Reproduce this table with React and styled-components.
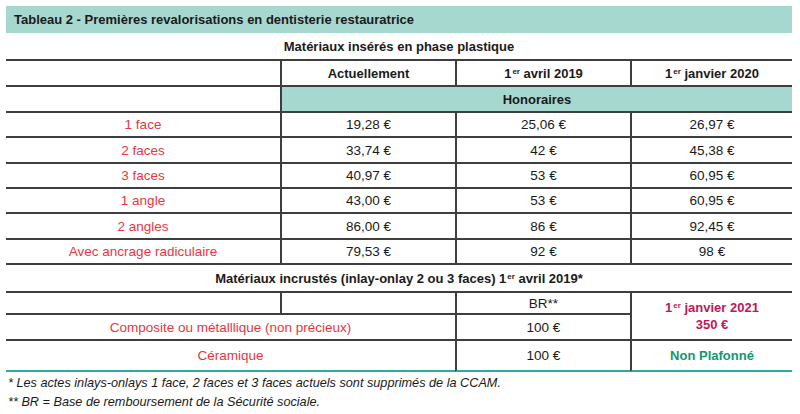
import React from "react";
import styled, { createGlobalStyle } from "styled-components";

const Global = createGlobalStyle`
  html, body { margin: 0; padding: 0; background: #ffffff; }
  body { font-family: "Liberation Sans", Arial, sans-serif; color: #1e1e1e; }
`;

const Page = styled.div`
  width: 786px;
  padding: 6px 0 0 6px;
`;

const TitleBar = styled.div`
  height: 27px;
  background: #a7d8d0;
  display: flex;
  align-items: center;
  padding-left: 8px;
  font-size: 13px;
  font-weight: 700;
  color: #1a1a1a;
`;

const Caption = styled.div`
  height: 26px;
  display: flex;
  align-items: center;
  justify-content: center;
  font-size: 13px;
  font-weight: 700;
  color: #1a1a1a;
`;

const Table = styled.table`
  width: 786px;
  border-collapse: separate;
  border-spacing: 0;
  table-layout: fixed;
  border-top: 2px solid #3e3e3e;
`;

const Row = styled.tr`
  height: ${(p) => p.$h}px;
`;

const tones = {
  dark: "#1a1a1a",
  red: "#e8363f",
  magenta: "#c0185a",
  green: "#13976f",
};

const Cell = styled.td`
  padding: 0;
  text-align: center;
  vertical-align: middle;
  color: ${(p) => tones[p.$tone || "dark"]};
  font-weight: ${(p) => (p.$bold ? 700 : 400)};
  font-size: ${(p) => (p.$bold ? "13px" : "13.5px")};
  background: ${(p) => (p.$teal ? "#a7d8d0" : "transparent")};
  border-bottom: 2px solid ${(p) => (p.$last ? "#2ea9a6" : "#3e3e3e")};
  border-left: ${(p) => (p.$first ? "none" : "2px solid #3e3e3e")};
  line-height: ${(p) => (p.$stack ? "17px" : "normal")};
`;

const Sup = styled.sup`
  font-size: 8px;
  line-height: 0;
  vertical-align: 4px;
  margin-left: 1px;
`;

const Footer = styled.div`
  padding: 2px 0 0 2px;
  font-size: 12.7px;
  font-style: italic;
  line-height: 19px;
  color: #1a1a1a;
`;

const plastic = [
  ["1 face", "19,28 €", "25,06 €", "26,97 €", 25],
  ["2 faces", "33,74 €", "42 €", "45,38 €", 26],
  ["3 faces", "40,97 €", "53 €", "60,95 €", 25],
  ["1 angle", "43,00 €", "53 €", "60,95 €", 25],
  ["2 angles", "86,00 €", "86 €", "92,45 €", 26],
  ["Avec ancrage radiculaire", "79,53 €", "92 €", "98 €", 25],
];

export default function App() {
  return (
    <>
      <Global />
      <Page>
        <TitleBar>Tableau 2 - Premières revalorisations en dentisterie restauratrice</TitleBar>
        <Caption>Matériaux insérés en phase plastique</Caption>
        <Table>
          <colgroup>
            <col style={{ width: 274 }} />
            <col style={{ width: 175 }} />
            <col style={{ width: 175 }} />
            <col style={{ width: 162 }} />
          </colgroup>
          <tbody>
            <Row $h={26}>
              <Cell $first />
              <Cell $bold>Actuellement</Cell>
              <Cell $bold>
                1<Sup>er</Sup> avril 2019
              </Cell>
              <Cell $bold>
                1<Sup>er</Sup> janvier 2020
              </Cell>
            </Row>
            <Row $h={26}>
              <Cell $first />
              <Cell $bold $teal colSpan={3}>
                Honoraires
              </Cell>
            </Row>
            {plastic.map(([label, a, b, c, h]) => (
              <Row $h={h} key={label}>
                <Cell $first $tone="red">{label}</Cell>
                <Cell>{a}</Cell>
                <Cell>{b}</Cell>
                <Cell>{c}</Cell>
              </Row>
            ))}
            <Row $h={28}>
              <Cell $first $bold colSpan={4}>
                Matériaux incrustés (inlay-onlay 2 ou 3 faces) 1<Sup>er</Sup> avril 2019*
              </Cell>
            </Row>
            <Row $h={22}>
              <Cell $first />
              <Cell />
              <Cell>BR**</Cell>
              <Cell rowSpan={2} $tone="magenta" $bold $stack>
                1<Sup>er</Sup> janvier 2021
                <br />
                350 €
              </Cell>
            </Row>
            <Row $h={26}>
              <Cell $first colSpan={2} $tone="red">
                Composite ou métalllique (non précieux)
              </Cell>
              <Cell>100 €</Cell>
            </Row>
            <Row $h={31}>
              <Cell $first $last colSpan={2} $tone="red">
                Céramique
              </Cell>
              <Cell $last>100 €</Cell>
              <Cell $last $tone="green" $bold>
                Non Plafonné
              </Cell>
            </Row>
          </tbody>
        </Table>
        <Footer>
          <div>* Les actes inlays-onlays 1 face, 2 faces et 3 faces actuels sont supprimés de la CCAM.</div>
          <div>** BR = Base de remboursement de la Sécurité sociale.</div>
        </Footer>
      </Page>
    </>
  );
}
